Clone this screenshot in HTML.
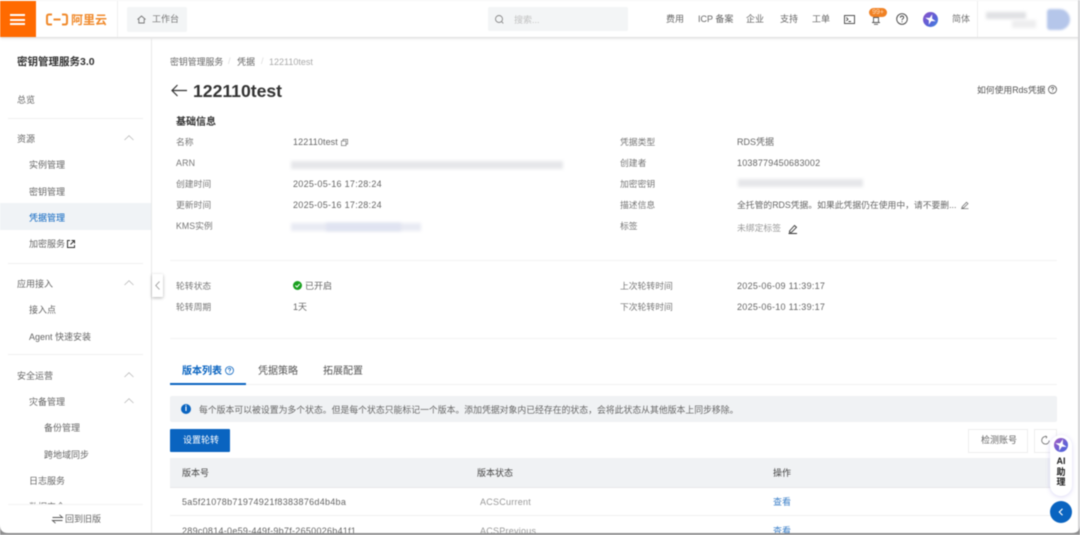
<!DOCTYPE html>
<html lang="zh-CN"><head><meta charset="utf-8"><title>122110test</title>
<style>
html,body{margin:0;padding:0;width:1080px;height:535px;overflow:hidden;background:#fff}
#p{position:absolute;left:0;top:0;width:1080px;height:535px;overflow:hidden;background:#fff;font-family:"Liberation Sans","Noto Sans CJK SC",sans-serif;filter:blur(.45px)}
.t{position:absolute;white-space:nowrap;line-height:14px;font-size:9px;color:#666}
.b{position:absolute}
.s{font-size:9px;color:#666}
.l{color:#777;font-size:8.8px}
.v{color:#666;letter-spacing:.28px}
.h{position:absolute;height:1px;background:#efefef}
svg{position:absolute;overflow:visible}
.bl{position:absolute;background:#e6e7ea;filter:blur(1.5px)}
</style></head><body><div id="p">

<!-- header -->
<div class="b" style="left:0;top:1px;width:1080px;height:36px;background:#fff;box-shadow:0 1px 3px rgba(0,0,0,.18)"></div>
<div class="b" style="left:0;top:1px;width:36px;height:36px;background:#ff6a00"></div>
<div class="b" style="left:10px;top:14px;width:15px;height:2px;background:#fff"></div>
<div class="b" style="left:10px;top:18.500px;width:15px;height:2px;background:#fff"></div>
<div class="b" style="left:10px;top:23px;width:15px;height:2px;background:#fff"></div>
<svg style="left:46px;top:13px" width="22" height="13" viewBox="0 0 22 13" fill="none" stroke="#f08a2c" stroke-width="2"><path d="M6 1.500H3Q1 1.500 1 3.500V9.500Q1 11.500 3 11.500H6M16 1.500H19Q21 1.500 21 3.500V9.500Q21 11.500 19 11.500H16M7.500 6.500H14.500"/></svg>
<div class="t" style="left:71px;top:12px;font-size:12px;line-height:16px;color:#f08a2c;font-weight:bold">阿里云</div>
<div class="b" style="left:117px;top:1px;width:1px;height:36px;background:#f0f0f0"></div>
<div class="b" style="left:127px;top:7px;width:60px;height:25px;background:#f3f5f6;border-radius:2px"></div>
<svg style="left:137px;top:15px" width="9" height="9" viewBox="0 0 9 9" fill="none" stroke="#777" stroke-width=".9"><path d="M.5 4.500L4.500 1L8.500 4.500M1.800 4V8H7.200V4"/></svg>
<div class="t" style="left:152px;top:12px;color:#777">工作台</div>

<div class="b" style="left:488px;top:7px;width:140px;height:24px;background:#f3f5f6;border-radius:2px"></div>
<svg style="left:495px;top:15px" width="9" height="9" viewBox="0 0 9 9" fill="none" stroke="#888" stroke-width=".9"><circle cx="4" cy="4" r="3.500"/><path d="M6.600 6.600L8.300 8.400"/></svg>
<div class="t" style="left:514px;top:13px;color:#c2c2c2">搜索...</div>
<div class="t" style="left:666px;top:12px">费用</div>
<div class="t" style="left:698px;top:12px">ICP 备案</div>
<div class="t" style="left:746px;top:12px">企业</div>
<div class="t" style="left:780px;top:12px">支持</div>
<div class="t" style="left:812px;top:12px">工单</div>
<svg style="left:844px;top:15px" width="11" height="9" viewBox="0 0 11 9" fill="none" stroke="#444" stroke-width=".9"><rect x=".5" y=".5" width="10" height="8"/><path d="M2.300 2.500L4 4.200L2.300 5.900M4.500 6.500H7"/></svg>
<svg style="left:871px;top:14px" width="10" height="11" viewBox="0 0 10 11" fill="none" stroke="#555" stroke-width=".9"><path d="M2.500 8V3.500H7.500V8M1 8.500H9M3 10.300H7"/></svg>
<div class="b" style="left:869px;top:8px;width:18px;height:9px;background:#f08124;border-radius:5px;color:#ffd9b5;font-size:7px;line-height:9px;text-align:center">99+</div>
<svg style="left:896px;top:13px" width="12" height="12" viewBox="0 0 12 12" fill="none" stroke="#444" stroke-width=".9"><circle cx="6" cy="6" r="5.300"/><path d="M4.300 4.700Q4.400 3 6 3Q7.700 3 7.700 4.500Q7.700 5.400 6.700 5.900Q6 6.300 6 7.200M6 8.300V9.200"/></svg>
<div class="b" style="left:923px;top:12px;width:15px;height:15px;border-radius:50%;background:linear-gradient(135deg,#8c52c8,#5a62d8 60%,#3f8ce0)"></div>
<svg style="left:925px;top:14px" width="11" height="11" viewBox="0 0 11 11"><path d="M5.500 0L6.800 4.200L11 5.500L6.800 6.800L5.500 11L4.200 6.800L0 5.500L4.200 4.200Z" fill="#fff" transform="rotate(18 5.500 5.500)"/></svg>
<div class="t" style="left:952px;top:12px;color:#777">简体</div>
<div class="b" style="left:977px;top:1px;width:1px;height:36px;background:#eee"></div>
<div class="bl" style="left:986px;top:12px;width:40px;height:7px;background:#e0e1e4"></div>
<div class="bl" style="left:1012px;top:20px;width:24px;height:8px;background:#eeeeef"></div>
<div class="b" style="left:1047px;top:9px;width:23px;height:21px;background:#b5c6ea;border-radius:3px 11px 11px 3px;filter:blur(1px)"></div>

<!-- right edge -->
<div class="b" style="left:1078px;top:0;width:2px;height:535px;background:#d4d4d6"></div>

<!-- sidebar -->
<div class="b" style="left:151px;top:38px;width:1px;height:496px;background:#e8e8e8"></div>
<div class="t" style="left:17px;top:55px;font-size:10.500px;color:#333;font-weight:bold">密钥管理服务3.0</div>
<div class="t s" style="left:17px;top:92.500px">总览</div>
<div class="h" style="left:8px;top:118px;width:135px"></div>
<div class="t s" style="left:17px;top:131.500px">资源</div>
<div class="t s" style="left:29px;top:158px">实例管理</div>
<div class="t s" style="left:29px;top:184.500px">密钥管理</div>
<div class="b" style="left:0;top:203px;width:151px;height:27px;background:#f0f3f6"></div>
<div class="t" style="left:29px;top:210.500px;color:#0a64c0">凭据管理</div>
<div class="t s" style="left:29px;top:236.500px">加密服务</div>
<svg style="left:67px;top:240px" width="8" height="8" viewBox="0 0 8 8" fill="none" stroke="#333" stroke-width="1"><path d="M3 .5H.5V7.500H7.500V5M4.500.5H7.500V3.500M7.500.5L3.500 4.500"/></svg>
<div class="h" style="left:8px;top:263px;width:135px"></div>
<div class="t s" style="left:17px;top:276.500px">应用接入</div>
<div class="t s" style="left:29px;top:302.500px">接入点</div>
<div class="t s" style="left:29px;top:329.500px">Agent 快速安装</div>
<div class="h" style="left:8px;top:354px;width:135px"></div>
<div class="t s" style="left:17px;top:368.500px">安全运营</div>
<div class="t s" style="left:29px;top:394.500px">灾备管理</div>
<div class="t s" style="left:44px;top:420.500px">备份管理</div>
<div class="t s" style="left:44px;top:447.500px">跨地域同步</div>
<div class="t s" style="left:29px;top:473.500px">日志服务</div>
<div class="t s" style="left:29px;top:500px">数据安全</div>
<div class="b" style="left:0;top:505px;width:151px;height:28px;background:#fff"></div>
<div class="h" style="left:8px;top:504px;width:135px;background:#f3f3f3"></div>
<svg style="left:124px;top:135px" width="10" height="6" fill="none" stroke="#bbb" stroke-width=".8"><path d="M.5 5L5 .7L9.500 5"/></svg>
<svg style="left:124px;top:280px" width="10" height="6" fill="none" stroke="#bbb" stroke-width=".8"><path d="M.5 5L5 .7L9.500 5"/></svg>
<svg style="left:124px;top:372px" width="10" height="6" fill="none" stroke="#bbb" stroke-width=".8"><path d="M.5 5L5 .7L9.500 5"/></svg>
<svg style="left:124px;top:398px" width="10" height="6" fill="none" stroke="#bbb" stroke-width=".8"><path d="M.5 5L5 .7L9.500 5"/></svg>
<svg style="left:52px;top:514px" width="11" height="10" fill="none" stroke="#555" stroke-width=".9"><path d="M.5 3.500H10.500L7.500 .8M10.500 6.500H.5L3.500 9.200"/></svg>
<div class="t s" style="left:65px;top:512px">回到旧版</div>
<div class="b" style="left:152px;top:274px;width:11px;height:23px;background:#fff;box-shadow:0 1px 3px rgba(0,0,0,.3);border-radius:0 1px 1px 0"></div>
<svg style="left:155px;top:281px" width="5" height="9" fill="none" stroke="#999" stroke-width=".9"><path d="M4.500 .5L.8 4.500L4.500 8.500"/></svg>

<!-- breadcrumb / title -->
<div class="t s" style="left:170px;top:55px;font-size:8.900px">密钥管理服务</div>
<div class="t" style="left:228px;top:54px;color:#ddd">/</div>
<div class="t s" style="left:237px;top:55px">凭据</div>
<div class="t" style="left:261px;top:54px;color:#ddd">/</div>
<div class="t" style="left:269px;top:55px;color:#aaa">122110test</div>
<svg style="left:171px;top:84px" width="16" height="13" fill="none" stroke="#333" stroke-width="1.200"><path d="M16 6.500H1M6.500 1L1 6.500L6.500 12"/></svg>
<div class="t" style="left:193px;top:80px;font-size:17.600px;line-height:22px;font-weight:bold;color:#333">122110test</div>
<div class="t" style="left:977px;top:83px;color:#555;font-size:8.800px">如何使用Rds凭据</div>
<svg style="left:1048px;top:85px" width="9" height="9" fill="none" stroke="#555" stroke-width=".8"><circle cx="4.500" cy="4.500" r="4"/><path d="M3.200 3.500Q3.300 2.300 4.500 2.300Q5.700 2.300 5.700 3.400Q5.700 4 5 4.400Q4.500 4.700 4.500 5.400M4.500 6.200V6.900"/></svg>
<div class="t" style="left:176px;top:116px;font-size:10px;font-weight:bold;color:#333">基础信息</div>

<!-- details left -->
<div class="t l" style="left:176px;top:135px">名称</div>
<div class="t" style="left:293px;top:135px;letter-spacing:.1px">122110test</div>
<svg style="left:341px;top:139px" width="7" height="7" fill="none" stroke="#777" stroke-width=".7"><rect x=".4" y="2" width="4.600" height="4.600"/><path d="M2 2V.4H6.600V5H5"/></svg>
<div class="t l" style="left:176px;top:156px;letter-spacing:.2px">ARN</div>
<div class="bl" style="left:291px;top:161px;width:272px;height:8px"></div>
<div class="t l" style="left:176px;top:177px">创建时间</div>
<div class="t v" style="left:293px;top:177px">2025-05-16 17:28:24</div>
<div class="t l" style="left:176px;top:198px">更新时间</div>
<div class="t v" style="left:293px;top:198px">2025-05-16 17:28:24</div>
<div class="t l" style="left:176px;top:219px">KMS实例</div>
<div class="bl" style="left:291px;top:223px;width:130px;height:8px;background:#e9ebf3"></div>
<div class="bl" style="left:326px;top:223px;width:75px;height:8px;background:#e0e3f1"></div>

<!-- details right -->
<div class="t l" style="left:620px;top:135px">凭据类型</div>
<div class="t s" style="left:737px;top:135px">RDS凭据</div>
<div class="t l" style="left:620px;top:156px">创建者</div>
<div class="t" style="left:737px;top:156px;letter-spacing:.2px">1038779450683002</div>
<div class="t l" style="left:620px;top:177px">加密密钥</div>
<div class="bl" style="left:738px;top:179px;width:125px;height:8px"></div>
<div class="t l" style="left:620px;top:198px">描述信息</div>
<div class="t s" style="left:737px;top:198px;font-size:8.800px">全托管的RDS凭据。如果此凭据仍在使用中，请不要删...</div>
<svg style="left:961px;top:201px" width="8" height="8" fill="none" stroke="#666" stroke-width=".7"><path d="M1 6L5.500 1.200L7 2.600L2.500 7H1ZM0 7.700H7.500"/></svg>
<div class="t l" style="left:620px;top:219px">标签</div>
<div class="t" style="left:737px;top:221px;color:#999;font-size:8.800px">未绑定标签</div>
<svg style="left:788px;top:224px" width="10" height="10" fill="none" stroke="#333" stroke-width=".9"><path d="M1.500 7L6.500 1.500L8.500 3.300L3.500 8.300H1.500ZM.5 9.500H9"/></svg>

<div class="h" style="left:170px;top:260px;width:887px;background:#f3f3f3"></div>

<div class="t l" style="left:176px;top:279px">轮转状态</div>
<div class="b" style="left:293px;top:281px;width:9px;height:9px;border-radius:50%;background:#1aa01f"></div>
<svg style="left:295px;top:283px" width="5" height="5" fill="none" stroke="#fff" stroke-width="1"><path d="M.3 2.500L2 4L4.700 1"/></svg>
<div class="t s" style="left:305px;top:279px">已开启</div>
<div class="t l" style="left:176px;top:300px">轮转周期</div>
<div class="t s" style="left:293px;top:300px">1天</div>
<div class="t l" style="left:620px;top:279px">上次轮转时间</div>
<div class="t v" style="left:737px;top:279px">2025-06-09 11:39:17</div>
<div class="t l" style="left:620px;top:300px">下次轮转时间</div>
<div class="t v" style="left:737px;top:300px">2025-06-10 11:39:17</div>

<div class="h" style="left:170px;top:338px;width:887px;background:#f3f3f3"></div>

<!-- tabs -->
<div class="t" style="left:182px;top:365px;font-size:10px;color:#0a64c0;font-weight:bold">版本列表</div>
<svg style="left:225px;top:366px" width="9" height="9" fill="none" stroke="#0a64c0" stroke-width=".8"><circle cx="4.500" cy="4.500" r="4"/><path d="M3.200 3.500Q3.300 2.300 4.500 2.300Q5.700 2.300 5.700 3.400Q5.700 4 5 4.400Q4.500 4.700 4.500 5.400M4.500 6.200V6.900"/></svg>
<div class="t" style="left:258px;top:365px;font-size:10px;color:#555">凭据策略</div>
<div class="t" style="left:323px;top:365px;font-size:10px;color:#555">拓展配置</div>
<div class="h" style="left:170px;top:384px;width:887px;background:#f2f2f2"></div>
<div class="b" style="left:170px;top:383px;width:76px;height:2px;background:#0a64c0"></div>

<!-- notice -->
<div class="b" style="left:170px;top:396px;width:887px;height:26px;background:#f0f2f4;border-radius:2px"></div>
<div class="b" style="left:181px;top:404px;width:10px;height:10px;border-radius:50%;background:#0a64c0;color:#fff;font-size:8px;line-height:10px;text-align:center;font-weight:bold">i</div>
<div class="t" style="left:199px;top:403px;color:#666;font-size:8.860px">每个版本可以被设置为多个状态。但是每个状态只能标记一个版本。添加凭据对象内已经存在的状态，会将此状态从其他版本上同步移除。</div>

<!-- buttons -->
<div class="b" style="left:170px;top:429px;width:60px;height:23px;background:#0a64c0;border-radius:1px"></div>
<div class="t" style="left:183px;top:433px;color:#fff">设置轮转</div>
<div class="b" style="left:968px;top:429px;width:58px;height:22px;border:1px solid #eee"></div>
<div class="t s" style="left:981px;top:433px">检测账号</div>
<div class="b" style="left:1034px;top:429px;width:21px;height:22px;border:1px solid #eee"></div>
<svg style="left:1041px;top:436px" width="9" height="9" fill="none" stroke="#666" stroke-width=".8"><path d="M6 .8A3.800 3.800 0 1 0 8.300 4.500M6 .8L4.300 0M6 .8L5 2.300"/></svg>

<!-- table -->
<div class="b" style="left:170px;top:458px;width:887px;height:30px;background:#f0f2f4"></div>
<div class="h" style="left:170px;top:487px;width:887px;background:#e8e8e8"></div>
<div class="t" style="left:182px;top:466px;color:#444">版本号</div>
<div class="t" style="left:477px;top:466px;color:#444">版本状态</div>
<div class="t" style="left:773px;top:466px;color:#444">操作</div>
<div class="t v" style="left:182px;top:495px">5a5f21078b71974921f8383876d4b4ba</div>
<div class="t" style="left:480px;top:495px;color:#999;letter-spacing:.25px">ACSCurrent</div>
<div class="t" style="left:773px;top:495px;color:#3b7fc8">查看</div>
<div class="h" style="left:170px;top:515px;width:887px"></div>
<div class="t v" style="left:182px;top:524px">289c0814-0e59-449f-9b7f-2650026b41f1</div>
<div class="t" style="left:480px;top:524px;color:#999;letter-spacing:.25px">ACSPrevious</div>
<div class="t" style="left:773px;top:524px;color:#3b7fc8">查看</div>

<!-- bottom window edge and rounded corners -->
<div class="b" style="left:0;top:533px;width:1080px;height:2px;background:#8f8f90"></div>
<svg style="left:0;top:525px" width="8" height="8"><path d="M0 0Q0 8 8 8H0Z" fill="#8f8f90"/></svg>
<svg style="left:1072px;top:525px" width="8" height="8"><path d="M8 0Q8 8 0 8H8Z" fill="#8f8f90"/></svg>

<!-- floating AI -->
<div class="b" style="left:1050px;top:435px;width:22px;height:61px;background:#fff;border-radius:11px;box-shadow:0 1px 5px rgba(110,100,220,.25)"></div>
<div class="b" style="left:1054px;top:438px;width:14px;height:14px;border-radius:50%;background:linear-gradient(135deg,#a85cc0,#5a62d8 70%)"></div>
<svg style="left:1055px;top:439px" width="12" height="12" viewBox="0 0 11 11"><path d="M5.500 0L6.800 4.200L11 5.500L6.800 6.800L5.500 11L4.200 6.800L0 5.500L4.200 4.200Z" fill="#fff" transform="rotate(18 5.500 5.500)"/></svg>
<div class="b" style="left:1050px;top:456px;width:22px;text-align:center;font-size:9px;line-height:10.500px;color:#222;font-weight:bold">AI<br>助<br>理</div>
<div class="b" style="left:1050px;top:501px;width:22px;height:22px;border-radius:50%;background:#0a64c0"></div>
<svg style="left:1058px;top:508px" width="6" height="8" fill="none" stroke="#fff" stroke-width="1.100"><path d="M4.500 .8L1.300 4L4.500 7.200"/></svg>

</div></body></html>
